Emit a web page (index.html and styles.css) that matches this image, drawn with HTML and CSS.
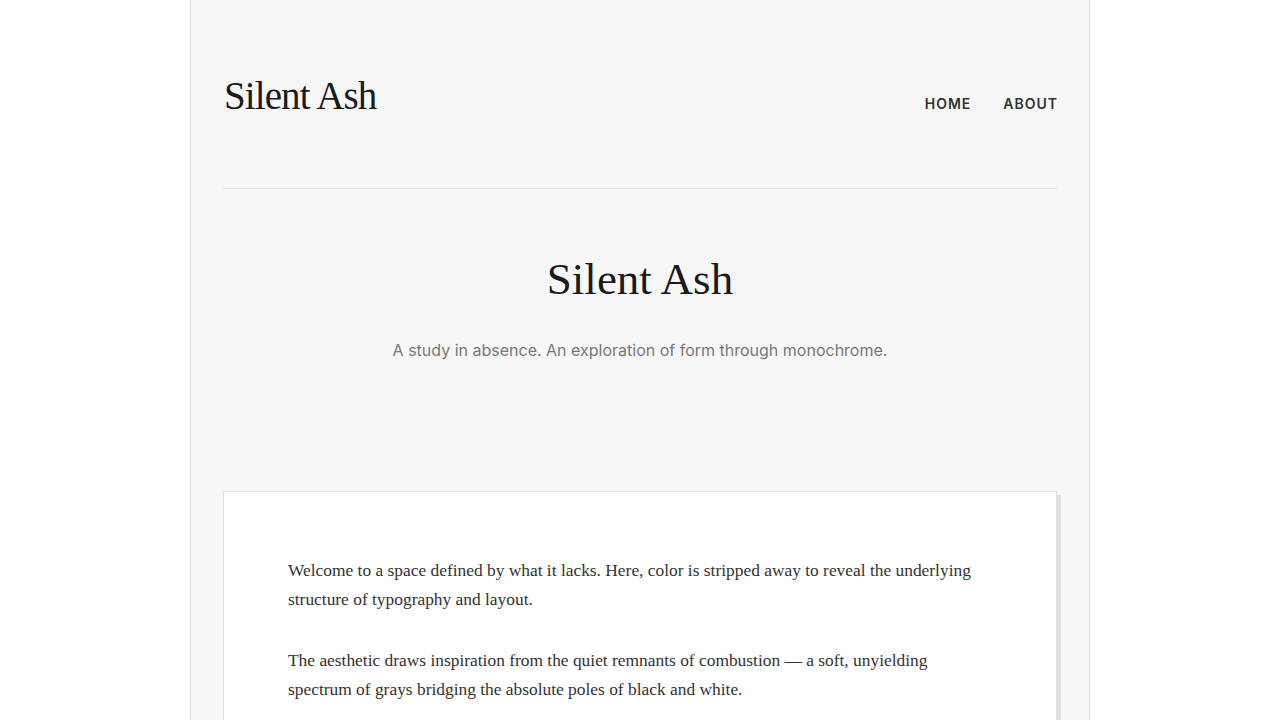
FILE: index.html
```html
<!DOCTYPE html>
<html lang="en">
<head>
<meta charset="utf-8">
<title>Silent Ash</title>
<link rel="stylesheet" href="styles.css">
</head>
<body>
<div class="page">
  <header class="site-header">
    <a class="logo" href="#">Silent Ash</a>
    <nav class="nav">
      <a href="#">Home</a>
      <a href="#">About</a>
    </nav>
  </header>
  <section class="hero">
    <h1 class="hero-title">Silent Ash</h1>
    <p class="hero-sub">A study in absence. An exploration of form through monochrome.</p>
  </section>
  <article class="card">
    <p>Welcome to a space defined by what it lacks. Here, color is stripped away to reveal the underlying structure of typography and layout.</p>
    <p>The aesthetic draws inspiration from the quiet remnants of combustion — a soft, unyielding spectrum of grays bridging the absolute poles of black and white.</p>
  </article>
</div>
</body>
</html>
```
FILE: styles.css
```css
html, body {
  margin: 0;
  padding: 0;
  background: #ffffff;
}
body {
  font-family: "Liberation Serif", "DejaVu Serif", serif;
  color: #1a1a1a;
}
.page {
  width: 834px;
  margin: 0 auto;
  padding: 0 32px;
  background: #f7f7f7;
  border-left: 1px solid #dddddd;
  border-right: 1px solid #dddddd;
  min-height: 720px;
}
.site-header {
  display: flex;
  justify-content: space-between;
  align-items: baseline;
  padding: 72px 0 68px;
  border-bottom: 1px solid #e2e2e2;
}
.logo {
  font-family: "Liberation Serif", serif;
  font-size: 39px;
  line-height: 48px;
  color: #1a1a1a;
  text-decoration: none;
  letter-spacing: -0.9px;
  margin-left: 1px;
}
.nav {
  display: flex;
  gap: 33px;
}
.nav a {
  font-family: Inter, "Noto Sans", sans-serif;
  font-size: 14px;
  font-weight: 600;
  letter-spacing: 1px;
  text-transform: uppercase;
  color: #333333;
  text-decoration: none;
  margin-right: -1px;
}
.hero {
  text-align: center;
  padding: 63px 0 129px;
}
.hero-title {
  margin: 0;
  font-family: "Liberation Serif", serif;
  font-weight: 400;
  font-size: 45px;
  line-height: 54px;
  color: #1a1a1a;
}
.hero-sub {
  margin: 32px 0 0;
  font-family: Inter, "Noto Sans", sans-serif;
  font-size: 16px;
  line-height: 24px;
  color: #777777;
}
.card {
  background: #ffffff;
  border: 1px solid #e0e0e0;
  box-shadow: 4px 4px 0 #dddddd;
  padding: 64px 64px 64px;
}
.card p {
  max-width: 690px;
  margin: 0 0 32px;
  font-family: "Liberation Serif", serif;
  font-size: 17.4px;
  line-height: 29px;
  color: #333333;
}
```
